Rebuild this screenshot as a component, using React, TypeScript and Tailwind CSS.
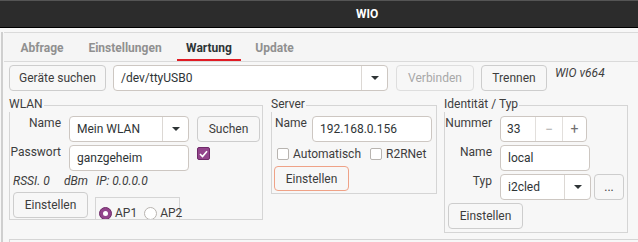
import React from "react";

const Btn = ({ w, h = "h-[26px]", children, className = "" }: { w: string; h?: string; children: React.ReactNode; className?: string }) => (
  <div
    className={`${w} ${h} shrink-0 flex items-center justify-center rounded-[4px] border bg-[#f7f7f7] ${className || "border-[#cdcdcd] text-[#3d3d3d]"}`}
  >
    {children}
  </div>
);

const Arrow = () => (
  <div className="w-0 h-0 border-l-[4px] border-r-[4px] border-t-[4px] border-l-transparent border-r-transparent border-t-[#2e3436]" />
);

const Combo = ({ w, text }: { w: string; text: string }) => (
  <div className={`${w} h-[26px] shrink-0 flex rounded-[4px] border border-[#cdc7c2] bg-white text-[#2e3436]`}>
    <div className="flex-1 flex items-center pl-[7px]">{text}</div>
    <div className="w-[26px] border-l border-[#dcd8d4] flex items-center justify-center">
      <Arrow />
    </div>
  </div>
);

const Input = ({ w, text }: { w: string; text: string }) => (
  <div className={`${w} h-[26px] shrink-0 flex items-center pl-[7px] rounded-[4px] border border-[#cdc7c2] bg-white text-[#2e3436]`}>
    {text}
  </div>
);

const Check = ({ checked = false }: { checked?: boolean }) =>
  checked ? (
    <div className="w-[13px] h-[13px] shrink-0 rounded-[2px] border border-[#6f2a69] bg-[#92448b] flex items-center justify-center">
      <svg width="9" height="8" viewBox="0 0 9 8">
        <path d="M1 4 L3.5 6.5 L8 1.2" stroke="white" strokeWidth="1.6" fill="none" />
      </svg>
    </div>
  ) : (
    <div className="w-[12px] h-[12px] shrink-0 rounded-[2px] border border-[#b8b4b0] bg-white" />
  );

const Radio = ({ checked = false }: { checked?: boolean }) =>
  checked ? (
    <div className="w-[13px] h-[13px] shrink-0 rounded-full bg-[#92448b] border border-[#6f2a69] flex items-center justify-center">
      <div className="w-[5px] h-[5px] rounded-full bg-white" />
    </div>
  ) : (
    <div className="w-[13px] h-[13px] shrink-0 rounded-full border border-[#b8b4b0] bg-white" />
  );

const Group = ({ title, w, h, children }: { title: string; w: string; h: string; children: React.ReactNode }) => (
  <div className={`${w} ${h} shrink-0 relative border border-[#d5d5d5]`}>
    <div className="absolute left-[-1px] top-[-9px] leading-[15px] bg-[#f7f7f7] text-[#3d3d3d] pr-[1px]">{title}</div>
    <div className="w-full h-full overflow-hidden">{children}</div>
  </div>
);

export default function App() {
  return (
    <div className="w-[638px] h-[242px] overflow-hidden bg-[#f7f7f7] font-['Roboto',sans-serif] text-[12px] text-[#3d3d3d]">
      {/* title bar */}
      <div className="h-[28px] bg-[#2c2c2c] border-t border-[#555] border-b border-b-black flex items-center">
        <span className="ml-[356px] text-white font-bold text-[12px]">WIO</span>
      </div>
      {/* window body */}
      <div className="ml-[1px] h-[214px] border-l-2 border-[#cfcfcf]">
        {/* tab bar */}
        <div className="ml-[1px] mt-[4px] h-[30px] border-y border-[#dadada] bg-[#f5f5f5] flex font-bold text-[12px]">
          <div className="ml-[6px] w-[64px] flex items-center justify-center text-[#909090] pt-[1px]">Abfrage</div>
          <div className="ml-[2px] w-[98px] flex items-center justify-center text-[#909090] pt-[1px]">Einstellungen</div>
          <div className="ml-[3px] w-[64px] flex items-center justify-center text-[#2e3436] border-b-2 border-[#e01b24] pt-[3px]">Wartung</div>
          <div className="ml-[2px] w-[63px] flex items-center justify-center text-[#909090] pt-[1px]">Update</div>
        </div>
        {/* connection row */}
        <div className="mt-[3px] pl-[6px] flex items-start">
          <Btn w="w-[97px]">Geräte suchen</Btn>
          <div className="ml-[7px]">
            <Combo w="w-[275px]" text="/dev/ttyUSB0" />
          </div>
          <Btn w="w-[78px]" className="ml-[8px] text-[#a8a8a8] border-[#dedede]">Verbinden</Btn>
          <Btn w="w-[66px]" className="ml-[7px] border-[#cdcdcd] text-[#3d3d3d]">Trennen</Btn>
          <div className="ml-[8px] mt-[1px] italic leading-[15px]">WIO v664</div>
        </div>
        {/* groups row */}
        <div className="mt-[14px] pl-[6px] flex items-start">
          <Group title="WLAN" w="w-[254px]" h="h-[115px]">
            <div className="pt-[10px]">
              <div className="flex items-start">
                <div className="w-[51px] text-right leading-[15px]">Name</div>
                <div className="ml-[8px]">
                  <Combo w="w-[120px]" text="Mein WLAN" />
                </div>
                <Btn w="w-[63px]" className="ml-[8px] border-[#cdcdcd] text-[#3d3d3d]">Suchen</Btn>
              </div>
              <div className="mt-[3px] flex items-start">
                <div className="w-[51px] text-right leading-[15px]">Passwort</div>
                <div className="ml-[8px]">
                  <Input w="w-[120px]" text="ganzgeheim" />
                </div>
                <div className="ml-[8px] mt-[2px]">
                  <Check checked />
                </div>
              </div>
              <div className="mt-[3px] pl-[3px] flex italic leading-[15px]">
                <span className="w-[51px]">RSSI. 0</span>
                <span className="w-[32px]">dBm</span>
                <span>IP: 0.0.0.0</span>
              </div>
              <div className="mt-[3px] pl-[3px] flex items-start">
                <Btn w="w-[75px]">Einstellen</Btn>
                <div className="ml-[7px] mt-[5px] w-[85px] h-[30px] border border-[#d5d5d5] flex items-start pt-[9px] pl-[3px]">
                  <Radio checked />
                  <span className="ml-[3px] leading-[13px]">AP1</span>
                  <div className="ml-[7px]">
                    <Radio />
                  </div>
                  <span className="ml-[3px] leading-[13px]">AP2</span>
                </div>
              </div>
            </div>
          </Group>
          <div className="ml-[8px]">
            <Group title="Server" w="w-[166px]" h="h-[89px]">
              <div className="pt-[10px]">
                <div className="flex items-start pl-[3px]">
                  <div className="w-[37px] leading-[15px]">Name</div>
                  <Input w="w-[120px]" text="192.168.0.156" />
                </div>
                <div className="mt-[6px] h-[12px] pl-[5px] flex items-center">
                  <div className="w-[93px] flex items-center">
                    <Check />
                    <span className="ml-[4px]">Automatisch</span>
                  </div>
                  <Check />
                  <span className="ml-[4px]">R2RNet</span>
                </div>
                <div className="mt-[6px] pl-[2px]">
                  <Btn w="w-[75px]" h="h-[25px]" className="border-[#efa287] text-[#3d3d3d]">Einstellen</Btn>
                </div>
              </div>
            </Group>
          </div>
          <div className="ml-[7px]">
            <Group title="Identität / Typ" w="w-[184px]" h="h-[128px]">
              <div className="pt-[10px]">
                <div className="flex items-start">
                  <div className="w-[47px] text-right leading-[15px]">Nummer</div>
                  <div className="ml-[8px] w-[87px] h-[26px] flex rounded-[4px] border border-[#cdc7c2] bg-white text-[#2e3436]">
                    <div className="w-[34px] flex items-center pl-[6px]">33</div>
                    <div className="w-[27px] border-l border-[#e2dfdc] flex items-center justify-center text-[#b0b0b0] text-[14px]">−</div>
                    <div className="flex-1 border-l border-[#e2dfdc] flex items-center justify-center text-[#707070] text-[14px]">+</div>
                  </div>
                </div>
                <div className="mt-[3px] flex items-start">
                  <div className="w-[47px] text-right leading-[15px]">Name</div>
                  <div className="ml-[8px]">
                    <Input w="w-[90px]" text="local" />
                  </div>
                </div>
                <div className="mt-[3px] flex items-start">
                  <div className="w-[47px] text-right leading-[15px]">Typ</div>
                  <div className="ml-[8px]">
                    <Combo w="w-[91px]" text="i2cled" />
                  </div>
                  <Btn w="w-[30px]" className="ml-[3px] border-[#cdcdcd] text-[#3d3d3d]">...</Btn>
                </div>
                <div className="mt-[3px] pl-[3px]">
                  <Btn w="w-[75px]">Einstellen</Btn>
                </div>
              </div>
            </Group>
          </div>
        </div>
        <div className="mt-[6px] ml-[6px] h-[10px] border-t border-l border-[#d5d5d5]" />
      </div>
    </div>
  );
}
